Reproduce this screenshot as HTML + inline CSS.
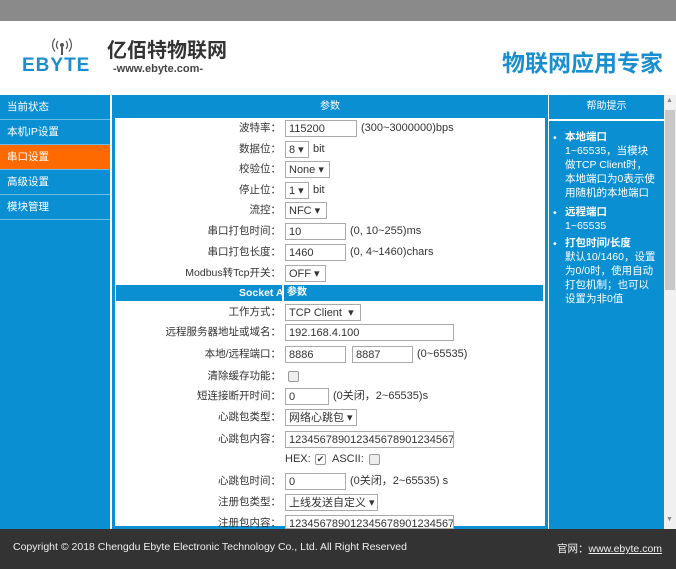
<!DOCTYPE html>
<html><head><meta charset="utf-8"><style>
*{margin:0;padding:0;box-sizing:border-box}
body{width:676px;height:569px;overflow:hidden;background:#fff;font-family:"Liberation Sans","Noto Sans CJK SC",sans-serif;font-size:11px;color:#333;position:relative}
.a{position:absolute}
.side div{position:absolute;left:0;width:110px;height:24px;background:#0a8fd3;color:#fff;line-height:24px;padding-left:7px;font-size:10.5px}
.lab{position:absolute;right:395px;text-align:right;white-space:nowrap;font-size:10.5px;line-height:17px}
.in,.sel{position:absolute;height:17px;border:1px solid #aaa;background:#fff;font-size:11px;padding:2px 0 0 3px;white-space:nowrap;overflow:hidden;line-height:13px}
.t{position:absolute;white-space:nowrap;font-size:11px;line-height:17px}
.cb{position:absolute;width:11px;height:11px;border:1px solid #999;background:#eee;border-radius:2px}
</style></head><body>
<div class="a" style="left:0;top:0;width:676px;height:21px;background:#8a8a8a"></div>
<svg class="a" style="left:48px;top:38px" width="28" height="18" viewBox="0 0 28 18"><g fill="none" stroke="#555" stroke-width="1.2"><path d="M10 3a6 6 0 0 0 0 8M18 3a6 6 0 0 1 0 8M7 0.5a10 10 0 0 0 0 13M21 0.5a10 10 0 0 1 0 13"/></g><circle cx="14" cy="7" r="2" fill="#555"/><rect x="13" y="9" width="2" height="8" fill="#555"/></svg>
<div class="a" style="left:22px;top:57px;font-size:19px;line-height:17px;font-weight:bold;color:#1a8fd0;letter-spacing:1px">EBYTE</div>
<div class="a" style="left:107px;top:39px;font-size:20px;line-height:24px;font-weight:bold;color:#333">亿佰特物联网</div>
<div class="a" style="left:113px;top:64px;font-size:11px;line-height:11px;font-weight:bold;color:#444">-www.ebyte.com-</div>
<div class="a" style="left:502px;top:44px;font-size:23px;font-weight:bold;color:#1a8fd0">物联网应用专家</div>
<div class="a" style="left:0;top:95px;width:110px;height:434px;background:#0a8fd3"></div>
<div class="side">
<div style="top:95px">当前状态</div>
<div style="top:120px">本机IP设置</div>
<div style="top:145px;background:#ff6a00">串口设置</div>
<div style="top:170px">高级设置</div>
<div style="top:195px">模块管理</div>
</div>
<div class="a" style="left:0;top:119px;width:110px;height:1px;background:#6bbde6"></div>
<div class="a" style="left:0;top:144px;width:110px;height:1px;background:#6bbde6"></div>
<div class="a" style="left:0;top:169px;width:110px;height:1px;background:#6bbde6"></div>
<div class="a" style="left:0;top:194px;width:110px;height:1px;background:#6bbde6"></div>
<div class="a" style="left:0;top:219px;width:110px;height:1px;background:#6bbde6"></div>
<div class="a" style="left:112px;top:95px;width:436px;height:434px;background:#fff;border:3px solid #0a8fd3;border-top:0"></div>
<div class="a" style="left:112px;top:95px;width:436px;height:23px;background:#0a8fd3;color:#fff;text-align:center;line-height:23px;font-size:10px">参数</div>
<div class="a" style="left:116px;top:285px;width:427px;height:16px;background:#0a8fd3"></div>
<div class="a" style="left:282px;top:285px;width:2px;height:16px;background:#fff"></div>
<div class="a" style="left:239px;top:285px;color:#fff;font-weight:bold;line-height:16px;font-size:10.5px">Socket A</div>
<div class="a" style="left:287px;top:285px;color:#fff;font-weight:bold;line-height:16px;font-size:10px">参数</div>

<div class="lab" style="top:120px">波特率：</div><div class="in" style="left:285px;top:120px;width:72px">115200</div><div class="t" style="left:361px;top:120px">(300~3000000)bps</div>
<div class="lab" style="top:141px">数据位：</div><div class="sel" style="left:285px;top:141px;width:24px">8 ▾</div><div class="t" style="left:313px;top:141px">bit</div>
<div class="lab" style="top:161px">校验位：</div><div class="sel" style="left:285px;top:161px;width:45px">None ▾</div>
<div class="lab" style="top:182px">停止位：</div><div class="sel" style="left:285px;top:182px;width:24px">1 ▾</div><div class="t" style="left:313px;top:182px">bit</div>
<div class="lab" style="top:202px">流控：</div><div class="sel" style="left:285px;top:202px;width:42px">NFC ▾</div>
<div class="lab" style="top:223px">串口打包时间：</div><div class="in" style="left:285px;top:223px;width:61px">10</div><div class="t" style="left:350px;top:223px">(0, 10~255)ms</div>
<div class="lab" style="top:244px">串口打包长度：</div><div class="in" style="left:285px;top:244px;width:61px">1460</div><div class="t" style="left:350px;top:244px">(0, 4~1460)chars</div>
<div class="lab" style="top:265px">Modbus转Tcp开关：</div><div class="sel" style="left:285px;top:265px;width:41px">OFF ▾</div>

<div class="lab" style="top:304px">工作方式：</div><div class="sel" style="left:285px;top:304px;width:76px">TCP Client&nbsp; ▾</div>
<div class="lab" style="top:324px">远程服务器地址或域名：</div><div class="in" style="left:285px;top:324px;width:169px">192.168.4.100</div>
<div class="lab" style="top:346px">本地/远程端口：</div><div class="in" style="left:285px;top:346px;width:61px">8886</div><div class="in" style="left:352px;top:346px;width:61px">8887</div><div class="t" style="left:417px;top:346px">(0~65535)</div>
<div class="lab" style="top:368px">清除缓存功能：</div><div class="cb" style="left:288px;top:371px"></div>
<div class="lab" style="top:388px">短连接断开时间：</div><div class="in" style="left:285px;top:388px;width:44px">0</div><div class="t" style="left:333px;top:388px">(0关闭，2~65535)s</div>
<div class="lab" style="top:409px">心跳包类型：</div><div class="sel" style="left:285px;top:409px;width:72px">网络心跳包 ▾</div>
<div class="lab" style="top:431px">心跳包内容：</div><div class="in" style="left:285px;top:431px;width:169px">12345678901234567890123456789</div>
<div class="t" style="left:285px;top:451px">HEX:</div><div class="cb" style="left:315px;top:454px;background:#fff;font-size:9px;line-height:9px;text-align:center">✔</div><div class="t" style="left:332px;top:451px">ASCII:</div><div class="cb" style="left:369px;top:454px"></div>
<div class="lab" style="top:473px">心跳包时间：</div><div class="in" style="left:285px;top:473px;width:61px">0</div><div class="t" style="left:350px;top:473px">(0关闭，2~65535) s</div>
<div class="lab" style="top:494px">注册包类型：</div><div class="sel" style="left:285px;top:494px;width:93px">上线发送自定义 ▾</div>
<div class="lab" style="top:515px">注册包内容：</div><div class="in" style="left:285px;top:515px;width:169px;height:14px">12345678901234567890123456789</div>

<div class="a" style="left:549px;top:95px;width:115px;height:24px;background:#0a8fd3;color:#fff;text-align:center;line-height:24px;font-size:10px">帮助提示</div>
<div class="a" style="left:549px;top:121px;width:115px;height:408px;background:#0a8fd3;color:#fff;font-size:10.5px;line-height:14px">
<div class="a" style="left:4px;top:10px">•</div><div class="a" style="left:16px;top:9px;width:90px"><b>本地端口</b><br>1~65535，当模块做TCP Client时，本地端口为0表示使用随机的本地端口</div>
<div class="a" style="left:4px;top:85px">•</div><div class="a" style="left:16px;top:84px;width:90px"><b>远程端口</b><br>1~65535</div>
<div class="a" style="left:4px;top:116px">•</div><div class="a" style="left:16px;top:115px;width:92px"><b>打包时间/长度</b><br>默认10/1460，设置为0/0时，使用自动打包机制；也可以设置为非0值</div>
</div>
<div class="a" style="left:664px;top:95px;width:12px;height:434px;background:#f0f0f0"></div>
<div class="a" style="left:665px;top:110px;width:10px;height:180px;background:#c8c8c8"></div>
<div class="a" style="left:666px;top:97px;font-size:7px;color:#888">▲</div>
<div class="a" style="left:666px;top:516px;font-size:7px;color:#888">▼</div>
<div class="a" style="left:0;top:529px;width:676px;height:40px;background:#333"></div>
<div class="a" style="left:13px;top:541px;color:#eee;font-size:10.5px">Copyright © 2018 Chengdu Ebyte Electronic Technology Co., Ltd. All Right Reserved</div>
<div class="a" style="left:557px;top:541px;color:#eee;font-size:10.5px">官网：<u>www.ebyte.com</u></div>
</body></html>
